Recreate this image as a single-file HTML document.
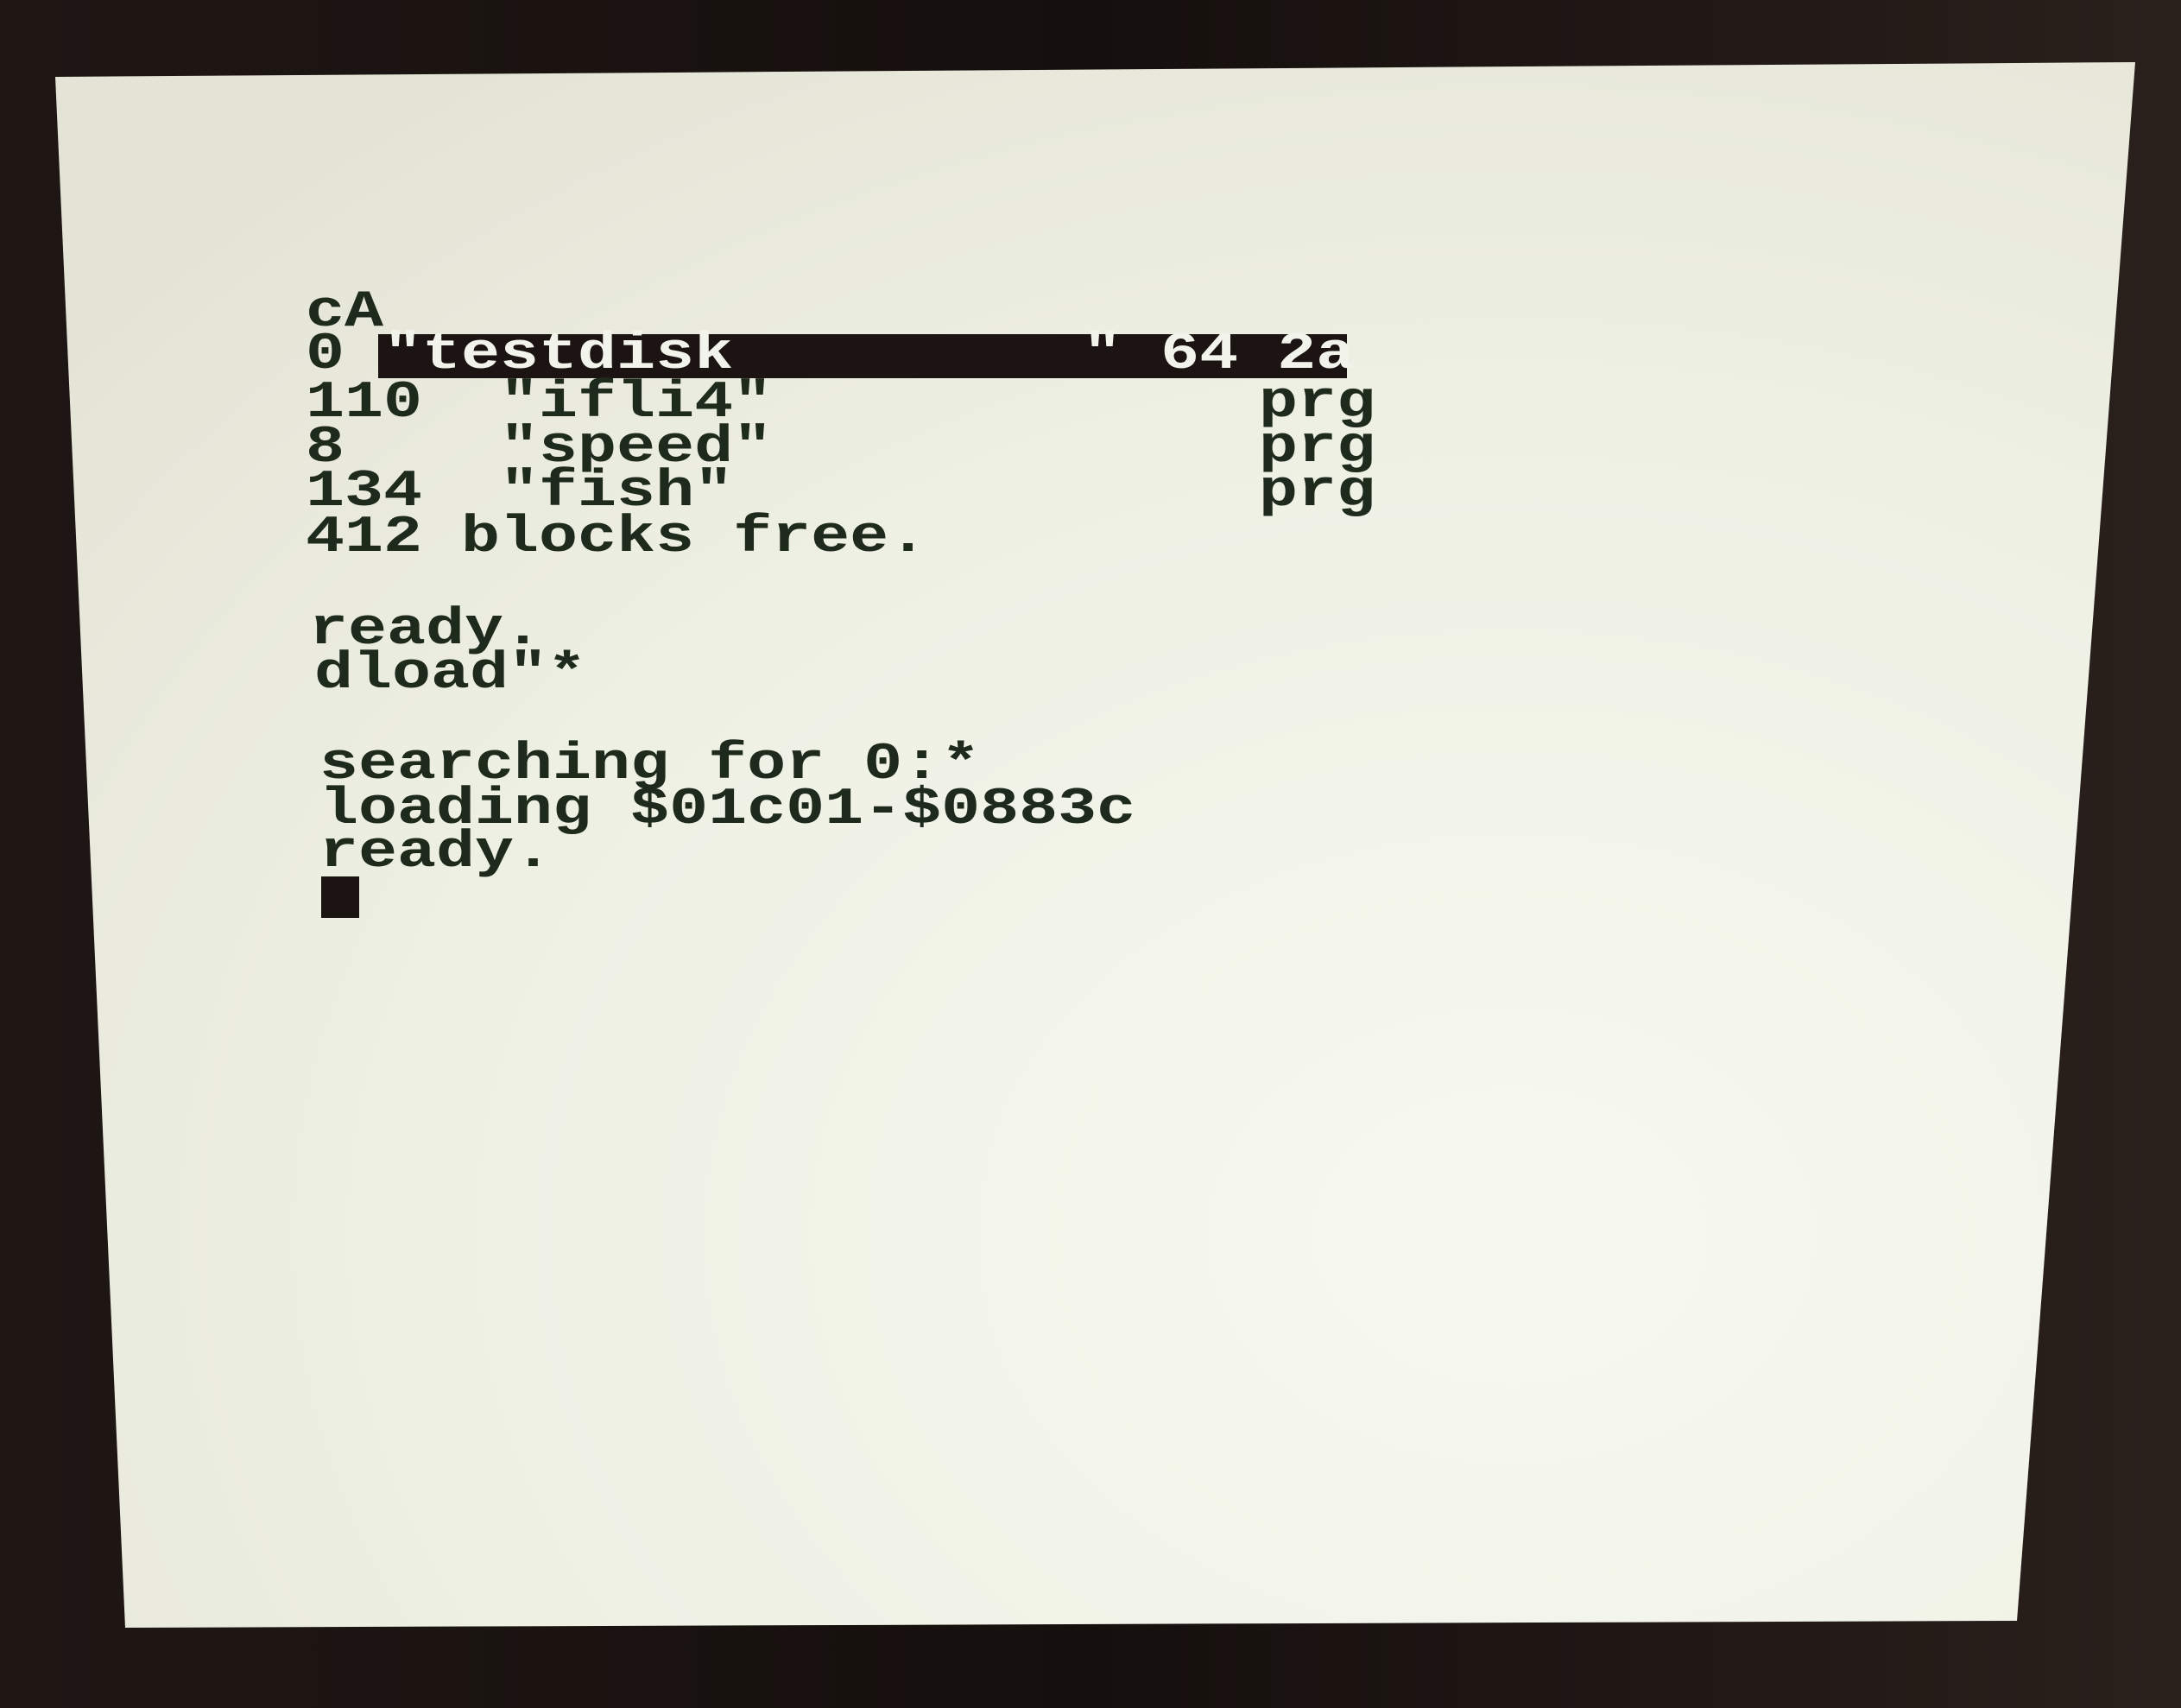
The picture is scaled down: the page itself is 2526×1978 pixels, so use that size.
<!DOCTYPE html>
<html><head><meta charset="utf-8">
<style>
html,body{margin:0;padding:0}
body{width:2526px;height:1978px;position:relative;overflow:hidden;background:#1b1412}
svg.bg{position:absolute;left:0;top:0}
.l{position:absolute;font-family:"Liberation Mono",monospace;font-weight:bold;font-size:60px;line-height:52px;color:#1e2a1c;white-space:pre;transform:scaleX(1.25);transform-origin:0 50%;height:52px}
.bar{position:absolute;background:#1c1413}
.w{color:#f2f3ea}
</style></head><body>
<svg class="bg" width="2526" height="1978" viewBox="0 0 2526 1978">
<defs>
<radialGradient id="g" cx="0.7" cy="0.75" r="0.9">
<stop offset="0" stop-color="#f7f9ef"/>
<stop offset="0.6" stop-color="#eef0e4"/>
<stop offset="1" stop-color="#e4e4d6"/>
</radialGradient>
<linearGradient id="b" x1="0" y1="0" x2="1" y2="0">
<stop offset="0" stop-color="#1f1714"/>
<stop offset="0.5" stop-color="#150f0d"/>
<stop offset="1" stop-color="#2a201c"/>
</linearGradient>
</defs>
<rect width="2526" height="1978" fill="url(#b)"/>
<polygon points="64,89 2473,72 2336,1877 145,1885" fill="url(#g)"/>
</svg>
<div class="bar" style="left:438px;top:387px;width:1122px;height:51px"></div>
<div class="l" style="left:354px;top:336px">cA</div>
<div class="l" style="left:354px;top:385px">0 <span class="w">"testdisk         " 64 2a</span></div>
<div class="l" style="left:354px;top:441px">110  "ifli4"</div>
<div class="l" style="left:1458px;top:441px">prg</div>
<div class="l" style="left:354px;top:493px">8    "speed"</div>
<div class="l" style="left:1458px;top:493px">prg</div>
<div class="l" style="left:354px;top:544px">134  "fish"</div>
<div class="l" style="left:1458px;top:544px">prg</div>
<div class="l" style="left:354px;top:597px">412 blocks free.</div>
<div class="l" style="left:358px;top:704px">ready.</div>
<div class="l" style="left:364px;top:755px">dload"*</div>
<div class="l" style="left:370px;top:860px">searching for 0:*</div>
<div class="l" style="left:370px;top:912px">loading $01c01-$0883c</div>
<div class="l" style="left:370px;top:962px">ready.</div>
<div class="bar" style="left:372px;top:1015px;width:44px;height:48px"></div>
</body></html>
